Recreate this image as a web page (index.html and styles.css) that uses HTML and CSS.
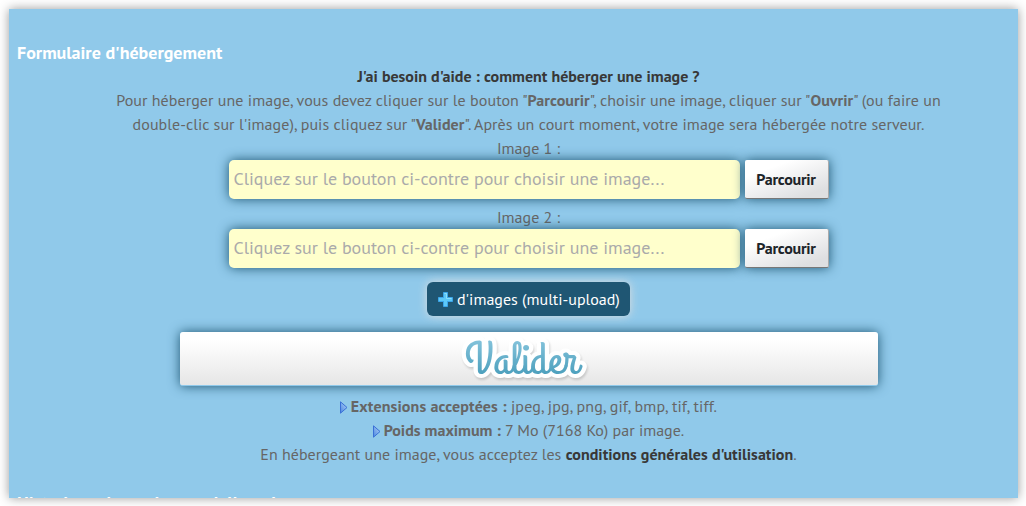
FILE: index.html
```html
<!DOCTYPE html>
<html lang="fr">
<head>
    <meta charset="UTF-8">
    <meta name="viewport" content="width=device-width, initial-scale=1.0">
    <title>Formulaire d'hébergement</title>
    <link rel="stylesheet" href="styles.css">
</head>
<body>
    <div class="panel">
        <h2>Formulaire d'hébergement</h2>

        <form class="upload-form">
            <p><a href="#">J'ai besoin d'aide : comment héberger une image ?</a></p>
            <p class="intro">Pour héberger une image, vous devez cliquer sur le bouton "<strong>Parcourir</strong>", choisir une image, cliquer sur "<strong>Ouvrir</strong>" (ou faire un</p>
            <p class="intro">double-clic sur l'image), puis cliquez sur "<strong>Valider</strong>". Après un court moment, votre image sera hébergée notre serveur.</p>

            <label for="image1">Image 1 :</label>
            <div class="file-row">
                <input type="text" id="image1" placeholder="Cliquez sur le bouton ci-contre pour choisir une image..." readonly>
                <button type="button" class="browse-btn">Parcourir</button>
            </div>

            <label for="image2">Image 2 :</label>
            <div class="file-row">
                <input type="text" id="image2" placeholder="Cliquez sur le bouton ci-contre pour choisir une image..." readonly>
                <button type="button" class="browse-btn">Parcourir</button>
            </div>

            <button type="button" class="more-btn">
                <svg width="15" height="15" viewBox="0 0 15 15">
                    <path d="M5.5 .5h4v5h5v4h-5v5h-4v-5h-5v-4h5z" fill="#5cc8f8" stroke="#3ba5ea"/>
                    <path d="M6.5 1.5h2v5h5" fill="none" stroke="#8be0fc"/>
                </svg>
                <span>d'images (multi-upload)</span>
            </button>

            <button type="button" class="submit-btn">
                <svg class="submit-label" width="140" height="53" viewBox="0 0 140 53">
                    <defs>
                        <linearGradient id="blue" x1="0" y1="0" x2="0" y2="1">
                            <stop offset="0.15" stop-color="#86c4dc"/>
                            <stop offset="0.8" stop-color="#459bb9"/>
                        </linearGradient>
                        <linearGradient id="arrow-fill" x1="0" y1="1" x2="1" y2="0">
                            <stop offset="0" stop-color="#4a86e0"/>
                            <stop offset="1" stop-color="#b4d3f8"/>
                        </linearGradient>
                    </defs>
                    <text x="6" y="41" textLength="113" lengthAdjust="spacingAndGlyphs">Valider</text>
                </svg>
            </button>

            <p class="extensions"><svg class="arrow" width="8" height="13" viewBox="0 0 8 13"><path d="M.5 .8L7 6.5L.5 12.2z" fill="url(#arrow-fill)" stroke="#3a70d6"/></svg><strong>Extensions acceptées :</strong> jpeg, jpg, png, gif, bmp, tif, tiff.</p>
            <p><svg class="arrow" width="8" height="13" viewBox="0 0 8 13"><path d="M.5 .8L7 6.5L.5 12.2z" fill="url(#arrow-fill)" stroke="#3a70d6"/></svg><strong>Poids maximum :</strong> 7 Mo (7168 Ko) par image.</p>
            <p class="terms">En hébergeant une image, vous acceptez les <a href="#">conditions générales d'utilisation</a>.</p>
        </form>

        <h2 class="next-title">Historique de vos images hébergées</h2>
    </div>
</body>
</html>
```

FILE: styles.css
```css
* {
    margin: 0;
    padding: 0;
    box-sizing: border-box;
}

body {
    height: 506px;
    padding: 9px 8px 8px 9px;
    overflow: hidden;
    background: white;
    color: #666;
    font-family: "PT Sans", "Noto Sans", sans-serif;
    font-size: 16px;
    line-height: 24px;
}

.panel {
    height: 489px;
    padding: 32px 0 0 8px;
    overflow: hidden;
    background: #90c9ea;
    box-shadow: 0 0 10px #999;
}

h2 {
    height: 23px;
    color: white;
    font-size: 18px;
    line-height: 24px;
    white-space: nowrap;
}

.upload-form {
    display: flex;
    flex-direction: column;
    align-items: center;
    padding-left: 22px;
}

.upload-form p,
label {
    height: 24px;
    white-space: nowrap;
}

.upload-form .intro {
    letter-spacing: 0.06px;
}

.upload-form .extensions {
    letter-spacing: 0.12px;
}

.upload-form .terms {
    letter-spacing: 0.03px;
}

a {
    color: #383838;
    font-weight: bold;
    text-decoration: none;
}

.file-row {
    display: flex;
    gap: 5px;
    margin-bottom: 6px;
}

.file-row input {
    width: 511px;
    height: 39px;
    padding: 0 5px 2px;
    border: none;
    border-radius: 5px;
    background: #ffffcc;
    box-shadow: 0 0 12px #1c5470;
    font-family: inherit;
    font-size: 18px;
}

.file-row input::placeholder {
    color: #aaa;
}

.browse-btn {
    width: 84px;
    height: 39px;
    border: none;
    border-right: 1px solid #aaa;
    border-bottom: 1px solid #777;
    border-radius: 2px;
    background: linear-gradient(160deg, #fff 25%, #dedfe1 85%);
    box-shadow: 0 0 12px #1c5470;
    color: #1c2429;
    font-family: inherit;
    font-size: 16px;
    font-weight: bold;
    letter-spacing: -0.25px;
}

.more-btn {
    display: flex;
    align-items: center;
    gap: 4px;
    width: 203px;
    height: 34px;
    margin-top: 8px;
    padding-left: 11px;
    border: none;
    border-radius: 6px;
    background: #1f5673;
    box-shadow: 0 0 10px #ddd;
    color: white;
    font-family: inherit;
    font-size: 16px;
    white-space: nowrap;
}

.submit-btn {
    display: flex;
    justify-content: center;
    width: 698px;
    height: 54px;
    margin: 16px 0 8px;
    border: none;
    border-bottom: 1px solid #90c9ea;
    border-radius: 3px;
    background: linear-gradient(#fff 15%, #e6e6e6);
    box-shadow: 0 0 12px #1c5470;
}

.submit-label text {
    fill: url(#blue);
    stroke: white;
    stroke-width: 8px;
    stroke-linejoin: round;
    paint-order: stroke;
    filter: drop-shadow(1px 2px 1px rgba(0, 0, 0, 0.15));
    font-family: "Grand Hotel", "Damion", "Yellowtail", "Dancing Script", "Pacifico", cursive;
    font-size: 46px;
}

.arrow {
    margin-right: 3px;
    vertical-align: -2px;
}

.next-title {
    margin-top: 25px;
}
```
